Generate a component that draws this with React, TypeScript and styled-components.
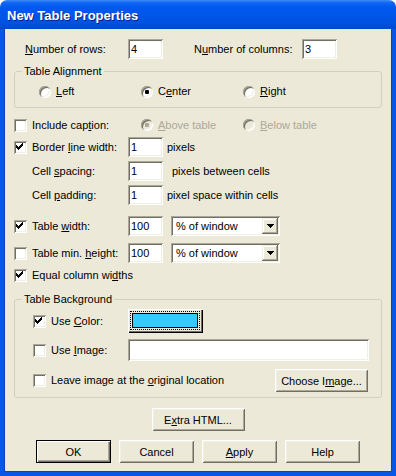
import React from "react";
import styled, { createGlobalStyle } from "styled-components";

const GlobalStyle = createGlobalStyle`
  html, body {
    margin: 0;
    padding: 0;
    background: #ffffff;
  }
  body {
    font-family: "Liberation Sans", Arial, sans-serif;
    font-size: 11px;
    color: #000000;
  }
  * {
    box-sizing: border-box;
  }
`;

const Window = styled.div`
  width: 396px;
  height: 476px;
  display: flex;
  flex-direction: column;
`;

const TitleBar = styled.div`
  height: 29px;
  flex: none;
  display: flex;
  align-items: center;
  padding: 2px 0 0 7px;
  border-radius: 7px 7px 0 0;
  background: linear-gradient(
    to bottom,
    #3d8cf8 0%,
    #0f66f3 10%,
    #0058ee 25%,
    #0056e8 55%,
    #0052e0 80%,
    #0047d0 100%
  );
  color: #ffffff;
  font-size: 13px;
  font-weight: bold;
  text-shadow: 1px 1px #0a1f8a;
`;

const Body = styled.div`
  flex: 1;
  display: flex;
  flex-direction: column;
  padding: 10px 10px 0;
  background: #ece9d8;
  border: 4px solid #0856e6;
  border-top: 0;
  box-shadow: inset 1px 0 #0a3fc8, inset -1px 0 #0a3fc8, inset 0 -1px #0a3fc8;
`;

const Row = styled.div<{ $mt?: number; $h?: number; $pl?: number; $pr?: number }>`
  display: flex;
  align-items: center;
  height: ${(p) => p.$h ?? 20}px;
  margin-top: ${(p) => p.$mt ?? 0}px;
  padding-left: ${(p) => p.$pl ?? 0}px;
  padding-right: ${(p) => p.$pr ?? 0}px;
  flex: none;
`;

const Text = styled.span<{ $w?: number; $ml?: number; $disabled?: boolean }>`
  flex: none;
  width: ${(p) => (p.$w ? `${p.$w}px` : "auto")};
  margin-left: ${(p) => p.$ml ?? 0}px;
  color: ${(p) => (p.$disabled ? "#aca899" : "#000000")};
  white-space: nowrap;
  line-height: 13px;
`;

const sunken = `
  background: #ffffff;
  box-shadow: inset 1px 1px #aca899, inset -1px -1px #ffffff,
    inset 2px 2px #716f64, inset -2px -2px #f1efe2;
`;

const TextBox = styled.div<{ $w: number; $h?: number; $ml?: number }>`
  ${sunken}
  flex: none;
  width: ${(p) => p.$w}px;
  height: ${(p) => p.$h ?? 20}px;
  margin-left: ${(p) => p.$ml ?? 0}px;
  padding: 2px 3px;
  display: flex;
  align-items: center;
  font-size: 11px;
`;

const Select = styled.div<{ $ml?: number }>`
  ${sunken}
  flex: none;
  width: 109px;
  height: 20px;
  margin-left: ${(p) => p.$ml ?? 0}px;
  padding: 2px 2px 2px 5px;
  display: flex;
  align-items: center;
  justify-content: space-between;
`;

const DropButton = styled.div`
  width: 16px;
  height: 16px;
  display: flex;
  align-items: center;
  justify-content: center;
  background: #ece9d8;
  box-shadow: inset -1px -1px #716f64, inset 1px 1px #f1efe2,
    inset -2px -2px #aca899, inset 2px 2px #ffffff;
`;

const Box = styled.div<{ $disabled?: boolean }>`
  ${sunken}
  flex: none;
  width: 13px;
  height: 13px;
  display: flex;
  align-items: center;
  justify-content: center;
  background: ${(p) => (p.$disabled ? "#ece9d8" : "#ffffff")};
`;

const RadioCircle = styled(Box)`
  width: 12px;
  height: 12px;
  border-radius: 50%;
`;

const Dot = styled.div<{ $disabled?: boolean }>`
  width: 4px;
  height: 4px;
  border-radius: 1px;
  background: ${(p) => (p.$disabled ? "#aca899" : "#000000")};
`;

const RadioItem = styled.div`
  flex: none;
  width: 102px;
  display: flex;
  align-items: center;
  gap: 5px;
`;

const Button = styled.div<{ $w: number; $default?: boolean }>`
  flex: none;
  width: ${(p) => p.$w}px;
  height: 23px;
  display: flex;
  align-items: center;
  justify-content: center;
  background: #ece9d8;
  border: ${(p) => (p.$default ? "1px solid #000000" : "0")};
  box-shadow: ${(p) =>
    p.$default
      ? "inset 1px 1px #ffffff, inset -1px -1px #716f64, inset -2px -2px #aca899"
      : "inset 1px 1px #ffffff, inset -1px -1px #716f64, inset 2px 2px #f1efe2, inset -2px -2px #aca899"};
`;

const ColorButton = styled.div`
  flex: none;
  width: 75px;
  height: 24px;
  padding: 2px 3px 3px 2px;
  display: flex;
  background: #ece9d8;
  box-shadow: inset 1px 1px #ffffff, inset -1px -1px #000000,
    inset -2px -2px #716f64;
`;

const FocusRect = styled.div`
  flex: 1;
  display: flex;
  padding: 1px;
  border: 1px dotted #000000;
`;

const Swatch = styled.div<{ $color: string }>`
  flex: 1;
  border: 1px solid #000000;
  background: ${(p) => p.$color};
`;

const Group = styled.fieldset<{ $mt: number; $pb: number }>`
  margin: ${(p) => p.$mt}px 0 0;
  padding: 0 0 ${(p) => p.$pb}px;
  border: 1px solid #d0d0bf;
  border-radius: 3px;
  min-inline-size: 0;
  flex: none;
`;

const Legend = styled.legend`
  margin-left: 7px;
  padding: 0 2px;
  font-size: 11px;
  line-height: 13px;
`;

const Spacer = styled.div`
  flex: 1;
`;

const Centered = styled.div<{ $mt: number; $gap?: number }>`
  display: flex;
  justify-content: center;
  gap: ${(p) => p.$gap ?? 0}px;
  margin-top: ${(p) => p.$mt}px;
  flex: none;
`;

function Check() {
  return (
    <svg width="9" height="9" viewBox="0 0 9 9" shapeRendering="crispEdges">
      <g fill="#000000">
        <rect x="6" y="0" width="1" height="1" />
        <rect x="5" y="1" width="2" height="1" />
        <rect x="0" y="2" width="1" height="1" />
        <rect x="4" y="2" width="3" height="1" />
        <rect x="0" y="3" width="2" height="1" />
        <rect x="3" y="3" width="3" height="1" />
        <rect x="0" y="4" width="5" height="1" />
        <rect x="1" y="5" width="3" height="1" />
        <rect x="2" y="6" width="1" height="1" />
      </g>
    </svg>
  );
}

function Arrow() {
  return (
    <svg width="7" height="4" viewBox="0 0 7 4" shapeRendering="crispEdges">
      <path d="M0 0h7v1h-1v1h-1v1h-1v1h-1v-1h-1v-1h-1v-1h-1z" fill="#000000" />
    </svg>
  );
}

function CheckBox({ checked }: { checked?: boolean }) {
  return <Box>{checked && <Check />}</Box>;
}

function Radio({
  checked,
  disabled,
  children,
}: {
  checked?: boolean;
  disabled?: boolean;
  children: React.ReactNode;
}) {
  return (
    <RadioItem>
      <RadioCircle $disabled={disabled}>
        {checked && <Dot $disabled={disabled} />}
      </RadioCircle>
      <Text $disabled={disabled}>{children}</Text>
    </RadioItem>
  );
}

function Dropdown({ value }: { value: string }) {
  return (
    <Select $ml={8}>
      <span>{value}</span>
      <DropButton>
        <Arrow />
      </DropButton>
    </Select>
  );
}

export default function App() {
  return (
    <Window>
      <GlobalStyle />
      <TitleBar>New Table Properties</TitleBar>
      <Body>
        <Row $pl={11}>
          <Text $w={103}>
            <u>N</u>umber of rows:
          </Text>
          <TextBox $w={35}>4</TextBox>
          <Text $w={108} $ml={31}>
            N<u>u</u>mber of columns:
          </Text>
          <TextBox $w={35}>3</TextBox>
        </Row>

        <Group $mt={6} $pb={9}>
          <Legend>Table Alignment</Legend>
          <Row $mt={7} $h={13} $pl={24}>
            <Radio>
              <u>L</u>eft
            </Radio>
            <Radio checked>
              C<u>e</u>nter
            </Radio>
            <Radio>
              <u>R</u>ight
            </Radio>
          </Row>
        </Group>

        <Row $mt={7}>
          <CheckBox />
          <Text $w={109} $ml={5}>
            Include cap<u>t</u>ion:
          </Text>
          <Radio checked disabled>
            <u>A</u>bove table
          </Radio>
          <Radio disabled>
            <u>B</u>elow table
          </Radio>
        </Row>
        <Row $mt={2}>
          <CheckBox checked />
          <Text $w={96} $ml={5}>
            Border <u>l</u>ine width:
          </Text>
          <TextBox $w={35}>1</TextBox>
          <Text $ml={4}>pixels</Text>
        </Row>
        <Row $mt={4} $pl={18}>
          <Text $w={96}>
            Cell <u>s</u>pacing:
          </Text>
          <TextBox $w={35}>1</TextBox>
          <Text $ml={9}>pixels between cells</Text>
        </Row>
        <Row $mt={4} $pl={18}>
          <Text $w={96}>
            Cell <u>p</u>adding:
          </Text>
          <TextBox $w={35}>1</TextBox>
          <Text $ml={4}>pixel space within cells</Text>
        </Row>
        <Row $mt={11}>
          <CheckBox checked />
          <Text $w={96} $ml={5}>
            Table <u>w</u>idth:
          </Text>
          <TextBox $w={35}>100</TextBox>
          <Dropdown value="% of window" />
        </Row>
        <Row $mt={7}>
          <CheckBox />
          <Text $w={96} $ml={5}>
            Table min. <u>h</u>eight:
          </Text>
          <TextBox $w={35}>100</TextBox>
          <Dropdown value="% of window" />
        </Row>
        <Row $mt={2}>
          <CheckBox checked />
          <Text $ml={5}>
            Equal column wi<u>d</u>ths
          </Text>
        </Row>

        <Group $mt={8} $pb={5}>
          <Legend>Table Background</Legend>
          <Row $mt={3} $h={24} $pl={18} $pr={12}>
            <CheckBox checked />
            <Text $w={77} $ml={5}>
              Use <u>C</u>olor:
            </Text>
            <ColorButton>
              <FocusRect>
                <Swatch $color="#33ccff" />
              </FocusRect>
            </ColorButton>
          </Row>
          <Row $mt={6} $h={22} $pl={18} $pr={12}>
            <CheckBox />
            <Text $w={77} $ml={5}>
              Use <u>I</u>mage:
            </Text>
            <TextBox $w={241} $h={22} />
          </Row>
          <Row $mt={8} $h={23} $pl={18} $pr={13}>
            <CheckBox />
            <Text $ml={5}>
              Leave image at the <u>o</u>riginal location
            </Text>
            <Spacer />
            <Button $w={93}>
              Choose I<u>m</u>age...
            </Button>
          </Row>
        </Group>

        <Centered $mt={10}>
          <Button $w={93}>
            E<u>x</u>tra HTML...
          </Button>
        </Centered>
        <Centered $mt={9} $gap={8}>
          <Button $w={75} $default>
            OK
          </Button>
          <Button $w={75}>Cancel</Button>
          <Button $w={75}>
            <u>A</u>pply
          </Button>
          <Button $w={75}>Help</Button>
        </Centered>
      </Body>
    </Window>
  );
}
